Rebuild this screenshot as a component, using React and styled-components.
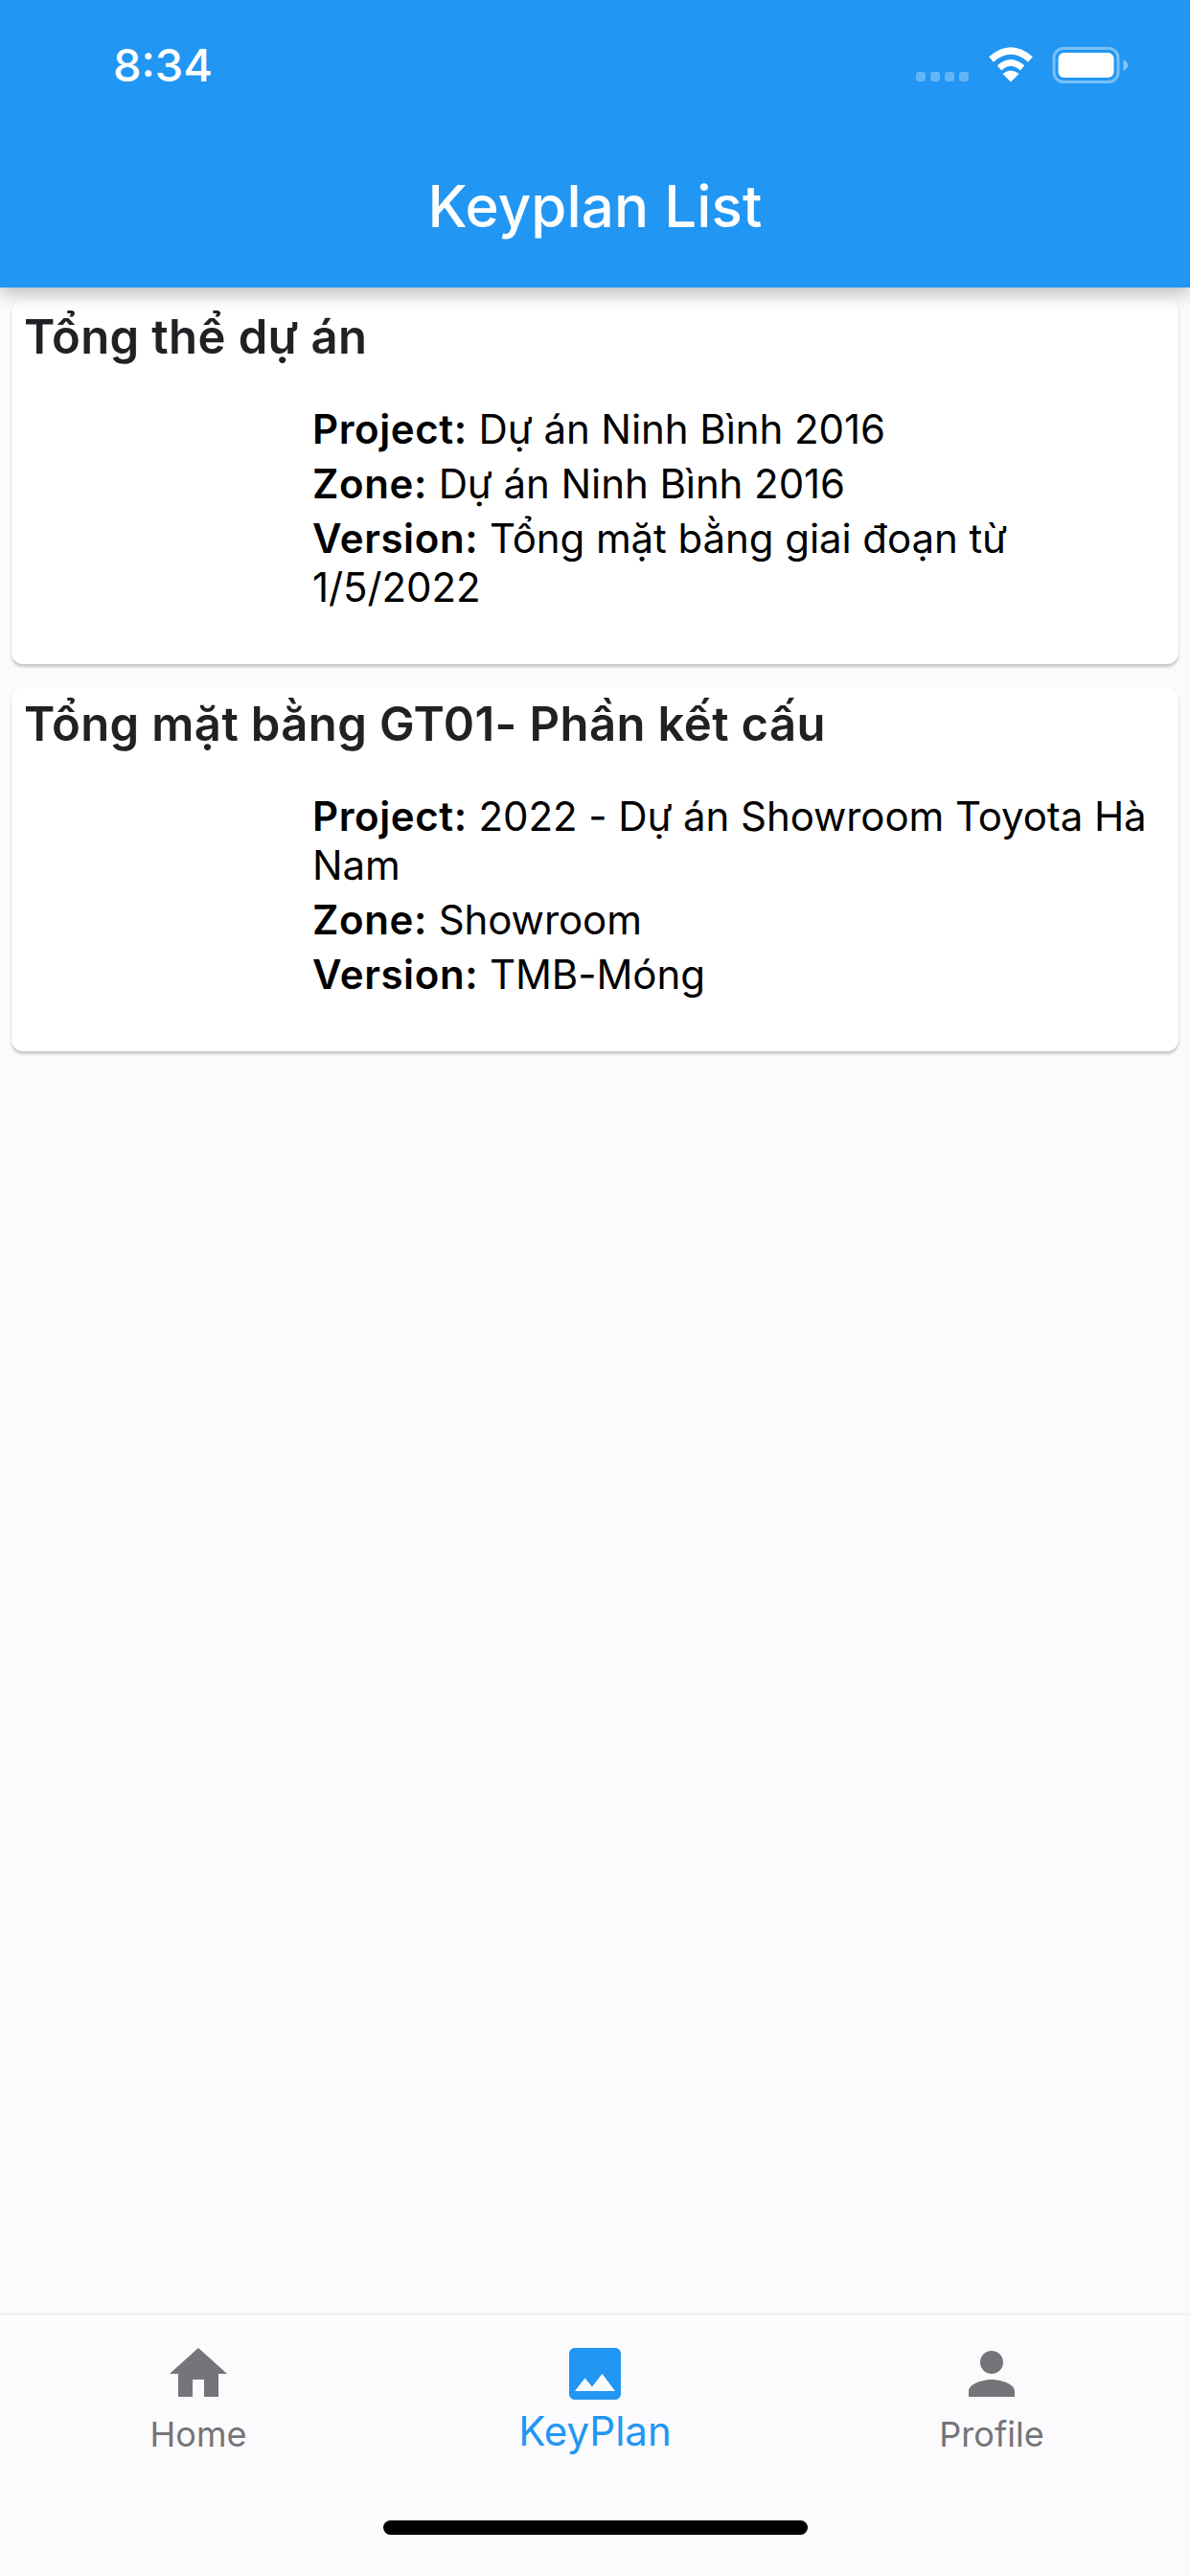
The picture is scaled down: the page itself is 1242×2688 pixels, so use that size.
import React from "react";
import styled, { createGlobalStyle } from "styled-components";

const Global = createGlobalStyle`
  html, body { margin: 0; padding: 0; }
  body { background: #fbfafd; font-family: Inter, "Noto Sans", sans-serif; }
  * { box-sizing: border-box; }
`;

const Screen = styled.div`
  width: 1242px;
  height: 2688px;
  display: flex;
  flex-direction: column;
  background: #fbfafd;
  overflow: hidden;
`;

const Header = styled.header`
  position: relative;
  z-index: 2;
  height: 300px;
  flex: none;
  background: #2196f3;
  color: #fff;
  box-shadow: 0 6px 18px rgba(0, 0, 0, 0.26);
  display: flex;
  flex-direction: column;
`;

const StatusBar = styled.div`
  height: 180px;
  padding: 44px 64px 0 118px;
  display: flex;
  align-items: flex-start;
  justify-content: space-between;
`;

const Time = styled.span`
  font-size: 47px;
  font-weight: 500;
  line-height: 48px;
`;

const StatusIcons = styled.div`
  display: flex;
  align-items: flex-start;
  margin-top: 5px;
`;

const Signal = styled.div`
  display: flex;
  gap: 5px;
  margin: 26px 20px 0 0;
`;

const SignalDot = styled.i`
  width: 10px;
  height: 10px;
  border-radius: 3px;
  background: rgba(255, 255, 255, 0.3);
`;

const Title = styled.h1`
  margin: 0;
  text-align: center;
  font-size: 60px;
  font-weight: 500;
  letter-spacing: 0.1px;
  line-height: 70px;
`;

const List = styled.main`
  flex: 1;
  padding: 13px 12px 0;
  display: flex;
  flex-direction: column;
  gap: 24px;
`;

const Card = styled.article`
  height: 380px;
  padding: 10px 13px 0;
  background: #fff;
  border-radius: 12px;
  box-shadow: 0 3px 3px rgba(0, 0, 0, 0.2), 0 0 2px rgba(0, 0, 0, 0.06);
`;

const CardTitle = styled.h2`
  margin: 0;
  font-size: 49px;
  font-weight: 600;
  letter-spacing: 0.4px;
  line-height: 58px;
  color: #212125;
`;

const CardBody = styled.div`
  display: grid;
  grid-template-columns: 301px 1fr;
  margin-top: 41px;
`;

const Thumb = styled.div``;

const Details = styled.div`
  display: flex;
  flex-direction: column;
  gap: 6px;
`;

const Line = styled.p`
  margin: 0;
  font-size: 42px;
  line-height: 51px;
  letter-spacing: -0.08px;
  color: #000;
`;

const Strong = styled.b`
  font-weight: 600;
  letter-spacing: 0.6px;
`;

const TabBar = styled.nav`
  flex: none;
  height: 275px;
  background: #fbfafd;
  border-top: 3px solid #f3f2f5;
  display: flex;
  flex-direction: column;
  align-items: center;
`;

const Tabs = styled.div`
  align-self: stretch;
  display: grid;
  grid-template-columns: repeat(3, 1fr);
  padding-top: 25px;
`;

const Tab = styled.div`
  display: flex;
  flex-direction: column;
  align-items: center;
  color: ${(p) => (p.$active ? "#2196f3" : "#757478")};
  font-size: ${(p) => (p.$active ? "42px" : "36px")};
  line-height: ${(p) => (p.$active ? "50px" : "44px")};
  svg { display: block; fill: currentColor; }
`;

const TabLabel = styled.span`
  margin-top: ${(p) => (p.$active ? "-1px" : "5px")};
`;

const HomeBar = styled.div`
  width: 443px;
  height: 15px;
  border-radius: 8px;
  background: #000;
  margin-top: 68px;
`;

const Icon = ({ d }) => (
  <svg width="72" height="72" viewBox="0 0 24 24" aria-hidden="true"><path d={d} /></svg>
);

const tabs = [
  { label: "Home", d: "M10 20v-6h4v6h5v-8h3L12 3 2 12h3v8z" },
  { label: "KeyPlan", active: true, d: "M21 19V5c0-1.1-.9-2-2-2H5c-1.1 0-2 .9-2 2v14c0 1.1.9 2 2 2h14c1.1 0 2-.9 2-2zM8.5 13.5l2.5 3.01L14.5 12l4.5 6H5l3.5-4.5z" },
  { label: "Profile", d: "M12 12c2.21 0 4-1.79 4-4s-1.79-4-4-4-4 1.79-4 4 1.79 4 4 4zm0 2c-2.67 0-8 1.34-8 4v2h16v-2c0-2.66-5.33-4-8-4z" },
];

const cards = [
  {
    title: "Tổng thể dự án",
    lines: [
      ["Project:", "Dự án Ninh Bình 2016"],
      ["Zone:", "Dự án Ninh Bình 2016"],
      ["Version:", "Tổng mặt bằng giai đoạn từ 1/5/2022"],
    ],
  },
  {
    title: "Tổng mặt bằng GT01- Phần kết cấu",
    lines: [
      ["Project:", "2022 - Dự án Showroom Toyota Hà Nam"],
      ["Zone:", "Showroom"],
      ["Version:", "TMB-Móng"],
    ],
  },
];

export default function App() {
  return (
    <Screen>
      <Global />
      <Header>
        <StatusBar>
          <Time>8:34</Time>
          <StatusIcons>
            <Signal>
              <SignalDot /><SignalDot /><SignalDot /><SignalDot />
            </Signal>
            <svg width="48" height="37" viewBox="0 0 48 37" aria-hidden="true" style={{ marginRight: 19 }}>
              <path d="M3.5 13 Q24 -5 44.5 13" fill="none" stroke="#fff" strokeWidth="7" />
              <path d="M12 22 Q24 11 36 22" fill="none" stroke="#fff" strokeWidth="6.5" />
              <path d="M24 36.5 L15.5 28 Q24 21 32.5 28 Z" fill="#fff" />
            </svg>
            <svg width="80" height="38" viewBox="0 0 80 38" aria-hidden="true">
              <rect x="2" y="1.5" width="67" height="35" rx="10" fill="none" stroke="#fff" strokeOpacity="0.4" strokeWidth="3" />
              <rect x="6.5" y="6" width="58" height="26" rx="6" fill="#fff" />
              <path d="M74.5 13 Q84 19 74.5 25 Z" fill="#fff" fillOpacity="0.45" />
            </svg>
          </StatusIcons>
        </StatusBar>
        <Title>Keyplan List</Title>
      </Header>
      <List>
        {cards.map((c) => (
          <Card key={c.title}>
            <CardTitle>{c.title}</CardTitle>
            <CardBody>
              <Thumb />
              <Details>
                {c.lines.map(([k, v]) => (
                  <Line key={k}><Strong>{k}</Strong> {v}</Line>
                ))}
              </Details>
            </CardBody>
          </Card>
        ))}
      </List>
      <TabBar>
        <Tabs>
          {tabs.map((t) => (
            <Tab key={t.label} $active={t.active}>
              <Icon d={t.d} />
              <TabLabel $active={t.active}>{t.label}</TabLabel>
            </Tab>
          ))}
        </Tabs>
        <HomeBar />
      </TabBar>
    </Screen>
  );
}
